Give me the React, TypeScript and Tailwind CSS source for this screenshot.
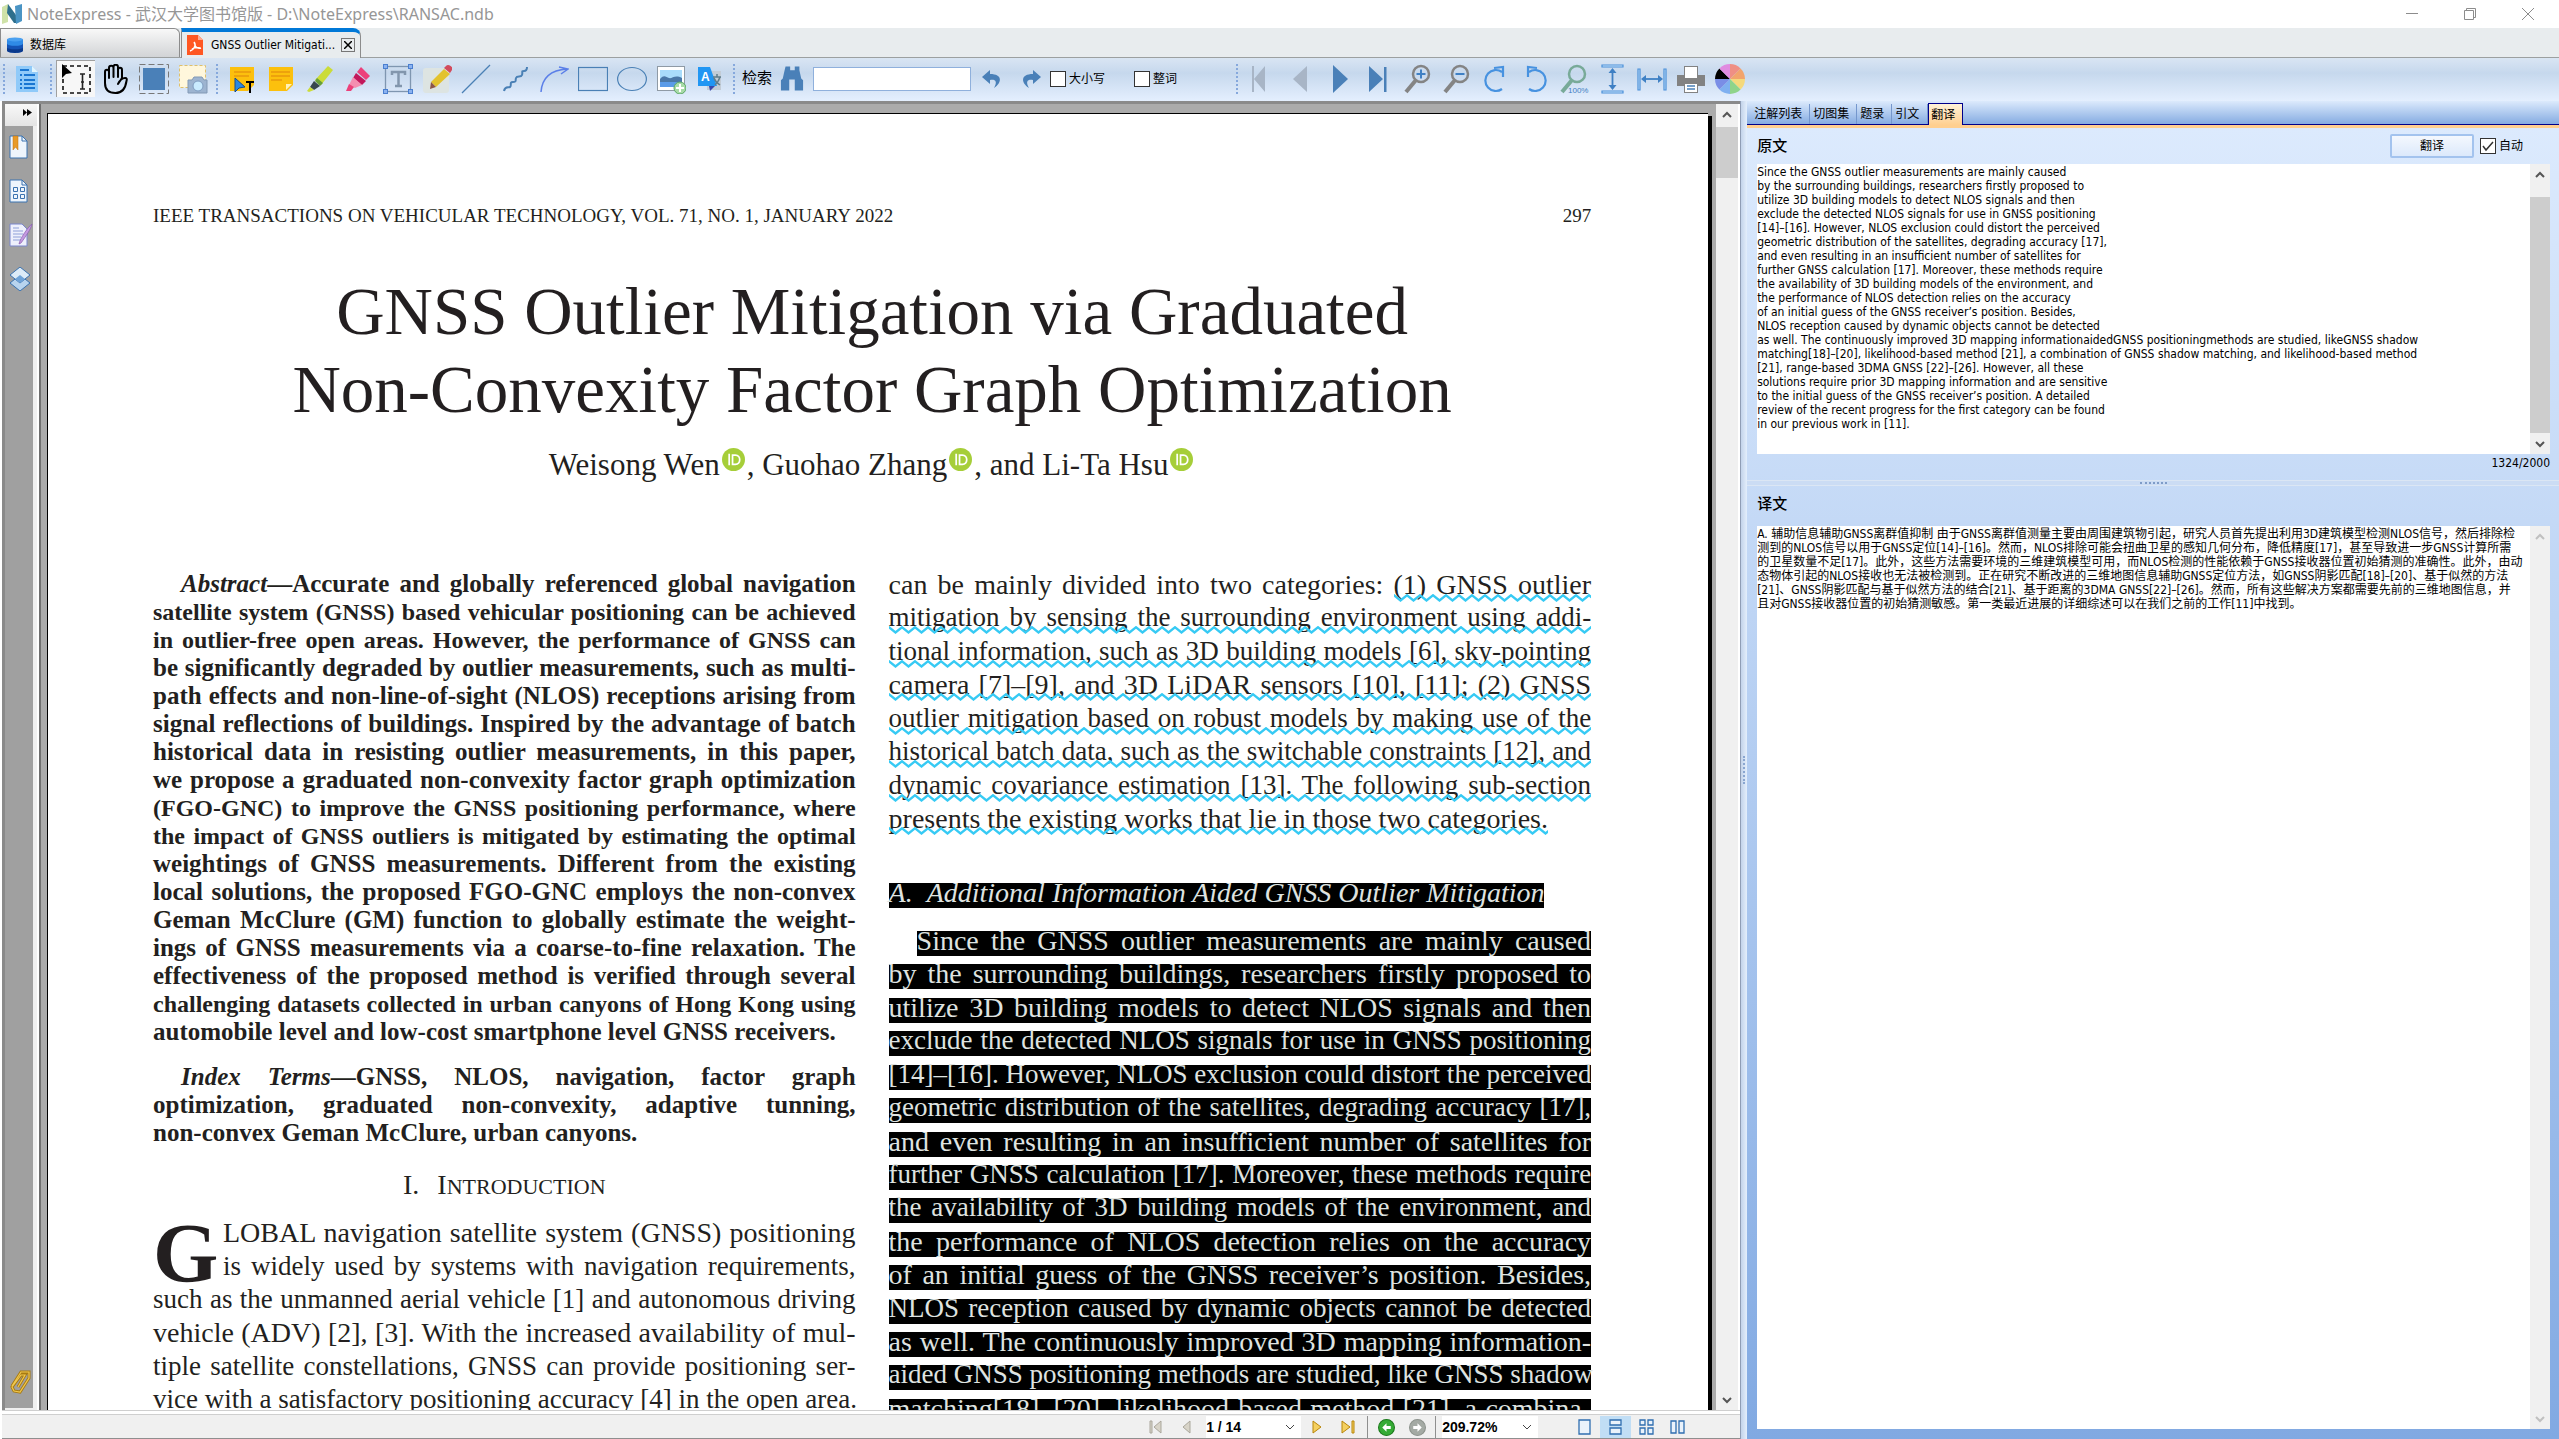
import type { ReactNode } from "react";
import clsx from "clsx";

const UI_FONT = "font-['DejaVu_Sans_Condensed','Roboto','Noto_Sans_CJK_SC',sans-serif]";
const PAPER_FONT = "font-['Liberation_Serif','Times_New_Roman',serif]";

type TextLine = { text: string; tight?: boolean };

const abstractLines: TextLine[] = [
  { text: "satellite system (GNSS) based vehicular positioning can be achieved", tight: true },
  { text: "in outlier-free open areas. However, the performance of GNSS can", tight: true },
  { text: "be significantly degraded by outlier measurements, such as multi-" },
  { text: "path effects and non-line-of-sight (NLOS) receptions arising from" },
  { text: "signal reflections of buildings. Inspired by the advantage of batch" },
  { text: "historical data in resisting outlier measurements, in this paper," },
  { text: "we propose a graduated non-convexity factor graph optimization" },
  { text: "(FGO-GNC) to improve the GNSS positioning performance, where", tight: true },
  { text: "the impact of GNSS outliers is mitigated by estimating the optimal", tight: true },
  { text: "weightings of GNSS measurements. Different from the existing" },
  { text: "local solutions, the proposed FGO-GNC employs the non-convex" },
  { text: "Geman McClure (GM) function to globally estimate the weight-" },
  { text: "ings of GNSS measurements via a coarse-to-fine relaxation. The" },
  { text: "effectiveness of the proposed method is verified through several" },
  { text: "challenging datasets collected in urban canyons of Hong Kong using", tight: true },
];

const introLines: TextLine[] = [
  { text: "such as the unmanned aerial vehicle [1] and autonomous driving", tight: true },
  { text: "vehicle (ADV) [2], [3]. With the increased availability of mul-" },
  { text: "tiple satellite constellations, GNSS can provide positioning ser-", tight: true },
  { text: "vice with a satisfactory positioning accuracy [4] in the open area.", tight: true },
];

const markedLines: TextLine[] = [
  { text: "mitigation by sensing the surrounding environment using addi-", tight: true },
  { text: "tional information, such as 3D building models [6], sky-pointing", tight: true },
  { text: "camera [7]–[9], and 3D LiDAR sensors [10], [11]; (2) GNSS" },
  { text: "outlier mitigation based on robust models by making use of the", tight: true },
  { text: "historical batch data, such as the switchable constraints [12], and", tight: true },
  { text: "dynamic covariance estimation [13]. The following sub-section", tight: true },
];

const selectedLines: TextLine[] = [
  { text: "Since the GNSS outlier measurements are mainly caused" },
  { text: "by the surrounding buildings, researchers firstly proposed to" },
  { text: "utilize 3D building models to detect NLOS signals and then" },
  { text: "exclude the detected NLOS signals for use in GNSS positioning", tight: true },
  { text: "[14]–[16]. However, NLOS exclusion could distort the perceived", tight: true },
  { text: "geometric distribution of the satellites, degrading accuracy [17],", tight: true },
  { text: "and even resulting in an insufficient number of satellites for" },
  { text: "further GNSS calculation [17]. Moreover, these methods require", tight: true },
  { text: "the availability of 3D building models of the environment, and", tight: true },
  { text: "the performance of NLOS detection relies on the accuracy" },
  { text: "of an initial guess of the GNSS receiver’s position. Besides," },
  { text: "NLOS reception caused by dynamic objects cannot be detected", tight: true },
  { text: "as well. The continuously improved 3D mapping information-" },
  { text: "aided GNSS positioning methods are studied, like GNSS shadow", tight: true },
  { text: "matching[18]–[20], likelihood-based method [21], a combina-" },
];

const sourceText = [
  ...selectedLines.slice(0, 12).map((line) => line.text),
  "as well. The continuously improved 3D mapping informationaidedGNSS positioningmethods are studied, likeGNSS shadow",
  "matching[18]–[20], likelihood-based method [21], a combination of GNSS shadow matching, and likelihood-based method",
  "[21], range-based 3DMA GNSS [22]–[26]. However, all these",
  "solutions require prior 3D mapping information and are sensitive",
  "to the initial guess of the GNSS receiver’s position. A detailed",
  "review of the recent progress for the first category can be found",
  "in our previous work in [11].",
].join("\n");

const translatedText = [
  "A. 辅助信息辅助GNSS离群值抑制 由于GNSS离群值测量主要由周围建筑物引起，研究人员首先提出利用3D建筑模型检测NLOS信号，然后排除检",
  "测到的NLOS信号以用于GNSS定位[14]–[16]。然而，NLOS排除可能会扭曲卫星的感知几何分布，降低精度[17]，甚至导致进一步GNSS计算所需",
  "的卫星数量不足[17]。此外，这些方法需要环境的三维建筑模型可用，而NLOS检测的性能依赖于GNSS接收器位置初始猜测的准确性。此外，由动",
  "态物体引起的NLOS接收也无法被检测到。正在研究不断改进的三维地图信息辅助GNSS定位方法，如GNSS阴影匹配[18]–[20]、基于似然的方法",
  "[21]、GNSS阴影匹配与基于似然方法的结合[21]、基于距离的3DMA GNSS[22]–[26]。然而，所有这些解决方案都需要先前的三维地图信息，并",
  "且对GNSS接收器位置的初始猜测敏感。第一类最近进展的详细综述可以在我们之前的工作[11]中找到。",
].join("\n");

function Svg({ children, className = "size-[30px]", box = 30 }: { children: ReactNode; className?: string; box?: number }) {
  return (
    <svg viewBox={`0 0 ${box} ${box}`} className={clsx("shrink-0", className)} fill="none" aria-hidden>
      {children}
    </svg>
  );
}

const magnifier = (color: string) => (
  <>
    <circle cx="18" cy="10" r="8" stroke={color} strokeWidth="2.5" />
    <path d="M13 16 3 28" stroke={color} strokeWidth="4" />
  </>
);

const editTools: { name: string; active?: boolean; icon: ReactNode }[] = [
  {
    name: "Select text",
    active: true,
    icon: (
      <>
        <rect x="2" y="2" width="27" height="27" stroke="#111" strokeWidth="1.6" strokeDasharray="4 3" />
        <path d="M1 0v14l4-4 6-1z" fill="#000" />
        <path d="M19 10h5M19 25h5M21.5 10v15M20 18h3" stroke="#222" strokeWidth="1.6" />
      </>
    ),
  },
  {
    name: "Hand",
    icon: (
      <path
        d="M5 19V8c0-3 4-3 4 0v6V4c0-3 4.500-3 4.500 0v9V3c0-3 4.500-3 4.500 0v10V6c0-3 4-3 4 0v8l-4 6c2-4 4-6 7-6 2 0 2 1 1.500 3-1 7-4 12-11 12S5 25 5 19z"
        stroke="#000"
        strokeWidth="2"
        strokeLinejoin="round"
      />
    ),
  },
  {
    name: "Select area",
    icon: (
      <>
        <rect x="0.5" y="0.5" width="29" height="29" stroke="#777" strokeDasharray="6 3" />
        <rect x="4" y="4" width="22" height="22" fill="#4a80b8" />
      </>
    ),
  },
  {
    name: "Snapshot",
    icon: (
      <>
        <rect x="1.5" y="1.5" width="26" height="22" fill="#fff7dc" stroke="#e0c06a" strokeDasharray="3 2" />
        <path d="M10 16h4l2-3h8l2 3h3v13H10z" fill="#9db4d0" stroke="#8299b5" />
        <circle cx="20" cy="22" r="5" fill="#c9ebff" stroke="#7f9cc0" />
      </>
    ),
  },
];

const markTools: { name: string; icon: ReactNode }[] = [
  {
    name: "Text note",
    icon: (
      <>
        <path d="M3 3h24v18l-6 6H3z" fill="#fcc00d" />
        <path d="M7 8h17M7 12h15" stroke="#e8980c" strokeWidth="1.5" />
        <path d="M8 14v14l4-4 6-1z" fill="#2a88e0" stroke="#174a88" />
        <path d="M19 18h8M23 18v11" stroke="#000" strokeWidth="2" />
      </>
    ),
  },
  {
    name: "Sticky note",
    icon: (
      <>
        <path d="M3 3h24v18l-6 6H3z" fill="#fcc00d" />
        <path d="M5 8h19M5 12h19M5 16h11" stroke="#e8980c" strokeWidth="1.3" />
        <path d="M20 20h6l-6 6z" fill="#fff2b8" />
      </>
    ),
  },
  {
    name: "Highlighter",
    icon: (
      <>
        <path d="m23 2 5 4-12 15-6-5z" fill="#cbdc38" />
        <path d="m12 14 6 5-3 3-5-5z" fill="#689f38" />
        <path d="m9 17 6 5-6 4-4-3z" fill="#37474f" />
        <path d="m5 23 4 3-5 2-2-1z" fill="#cbdc38" />
      </>
    ),
  },
  {
    name: "Eraser marker",
    icon: (
      <>
        <path d="m17 3 9 9-4 4-9-8z" fill="#ec407a" />
        <path d="m12 9 10 8-4 4L9 14z" fill="#c2185b" />
        <path d="m9 13 9 8-7 3-6-3z" fill="#f48fb1" />
        <path d="m5 20 5 3-3 4H2z" fill="#ec407a" />
      </>
    ),
  },
  {
    name: "Text box",
    icon: (
      <>
        <rect x="2.5" y="2.5" width="25" height="25" stroke="#7f96b0" strokeWidth="1.3" />
        {[[0, 0], [25, 0], [0, 25], [25, 25]].map(([x, y]) => (
          <rect key={`${x}-${y}`} x={x + 0.5} y={y + 0.5} width="4" height="4" fill="#8bb2f0" stroke="#4a7fd0" />
        ))}
        <path d="M9 11V8h13v3M15.5 8v14M12 22h7" stroke="#8296ad" strokeWidth="2.5" />
      </>
    ),
  },
  {
    name: "Pencil",
    icon: (
      <>
        <rect x="1" y="4" width="26" height="25" rx="3" fill="#dde4e2" />
        <path d="M22 5 28 10 14 23 9 18z" fill="#e3c22e" />
        <path d="m9 18 5 5-6 2z" fill="#8d5548" />
        <path d="M24 2c2-3 8 1 6 4l-2 3-6-5z" fill="#d24b5c" />
      </>
    ),
  },
  { name: "Line", icon: <path d="M1 29 29 1" stroke="#4a80b5" strokeWidth="1.3" /> },
  {
    name: "Freehand",
    icon: (
      <path
        d="M4 27c1-5 4-3 6-4s-1-5 3-5 2-1 3-4 5 0 6-3-1-4 2-4 3-2 3-4"
        stroke="#4a80b5"
        strokeWidth="2"
      />
    ),
  },
  {
    name: "Arrow",
    icon: <path d="M2 28C3 14 12 6 28 5M20 3l9 2-7 5" stroke="#5b7fe8" strokeWidth="1.5" />,
  },
  { name: "Rectangle", icon: <rect x="0.5" y="3.5" width="29" height="23" stroke="#4a80b5" strokeWidth="1.2" /> },
  { name: "Ellipse", icon: <ellipse cx="15" cy="15" rx="14.4" ry="11.5" stroke="#4a80b5" strokeWidth="1.2" /> },
  {
    name: "Image",
    icon: (
      <>
        <rect x="1.5" y="2.5" width="27" height="24" fill="#fff" stroke="#8f9aa5" />
        <rect x="4" y="6" width="22" height="17" fill="#a9dcfb" />
        <path d="M4 15c4-5 6-2 9-1s6-4 13 0v4H4z" fill="#4a78a8" />
        <path d="M4 18h22v5H4z" fill="#5a9be8" />
        <circle cx="24" cy="24" r="6" fill="#a8dba8" stroke="#5da766" />
        <path d="M20 24h8M24 20v8" stroke="#fff" strokeWidth="2" />
      </>
    ),
  },
  {
    name: "Translate",
    icon: (
      <>
        <rect x="12" y="7" width="14" height="19" fill="#c3ccd6" />
        <path d="m14 22 6 0-5 5z" fill="#3949ab" />
        <path d="M3 3h12l7 19H3z" fill="#2196f3" />
        <text x="6" y="17" fontSize="12" fontWeight="700" fill="#fff" fontFamily="Liberation Sans">A</text>
        <path d="M18 13h8M22 10v3M25 13c-1 4-3 6-5 8M19 14c1 3 3 5 6 7" stroke="#607d8b" strokeWidth="1.5" />
      </>
    ),
  },
];

const viewTools: { name: string; icon: ReactNode }[] = [
  { name: "First page", icon: <path d="M5 2h2v26H5zM18 2v26L7 15z" fill="#a8b5c6" /> },
  { name: "Previous page", icon: <path d="M21 2v26L7 15z" fill="#a8b5c6" /> },
  { name: "Next page", icon: <path d="M8 1v28l15-14z" fill="#4a80b8" /> },
  { name: "Last page", icon: <path d="M5 2v26l14-13zM20 3h2.500v25H20z" fill="#4a80b8" /> },
  {
    name: "Zoom in",
    icon: <>{magnifier("#848484")}<path d="M13.5 10h9M18 5.500v9" stroke="#3f80c4" strokeWidth="2" /></>,
  },
  {
    name: "Zoom out",
    icon: <>{magnifier("#848484")}<path d="M13.5 10h9" stroke="#3f80c4" strokeWidth="2" /></>,
  },
  {
    name: "Rotate clockwise",
    icon: <path d="M21 8A10.500 10.500 0 1 0 21 25M13 4l9-1v10" stroke="#4792e0" strokeWidth="2.2" />,
  },
  {
    name: "Rotate counter-clockwise",
    icon: <path d="M9 8A10.500 10.500 0 1 1 9 25M17 4 8 3v10" stroke="#4792e0" strokeWidth="2.2" />,
  },
  {
    name: "Actual size",
    icon: (
      <>
        {magnifier("#78aa98")}
        <text x="9" y="29" fontSize="8" fill="#3f80c4" fontFamily="Liberation Sans">100%</text>
      </>
    ),
  },
  {
    name: "Fit height",
    icon: (
      <>
        <path d="M4 1h21v2H4zM4 27h21v2H4z" stroke="#4a90d9" strokeWidth="1.2" fill="#cfe6fb" />
        <path d="M14.5 6v18" stroke="#3f80c4" strokeWidth="1.8" />
        <path d="m14.5 4 4 5h-8zM14.5 26l4-5h-8z" fill="#3f80c4" />
      </>
    ),
  },
  {
    name: "Fit width",
    icon: (
      <>
        <path d="M1 5h2v21H1zM27 5h2v21h-2z" stroke="#4a90d9" strokeWidth="1.2" fill="#cfe6fb" />
        <path d="M6 15h18" stroke="#3f80c4" strokeWidth="1.8" />
        <path d="m4 15 5-4v8zM26 15l-5-4v8z" fill="#3f80c4" />
      </>
    ),
  },
  {
    name: "Print",
    icon: (
      <>
        <path d="M1 11h28v11H1z" fill="#828282" />
        <rect x="8.5" y="2.5" width="13" height="12" fill="#fff" stroke="#828282" />
        <rect x="8.5" y="19.5" width="13" height="9" fill="#fff" stroke="#828282" />
        <path d="M11 22h8M11 25h8" stroke="#4a80b8" strokeWidth="1.5" />
      </>
    ),
  },
  {
    name: "Colours",
    icon: (
      <>
        {["#ef8f84", "#f2a46c", "#f5d97c", "#8fd48a", "#7fb0f0", "#7a8ee6", "#000", "#e08be0"].map((color, i) => (
          <path key={color} d="M15 15V0a15 15 0 0 1 10.600 4.400z" fill={color} transform={`rotate(${i * 45} 15 15)`} />
        ))}
      </>
    ),
  },
];

function ToolButton({ name, icon, active }: { name: string; icon: ReactNode; active?: boolean }) {
  return (
    <button
      type="button"
      aria-label={name}
      className={clsx(
        "grid h-[37px] w-[39px] shrink-0 place-items-center",
        active && "border-t border-l border-[#a0a0a0] bg-[#f7f7f7]",
      )}
    >
      <Svg>{icon}</Svg>
    </button>
  );
}

function Grip({ className = "w-[10px]" }: { className?: string }) {
  return (
    <span className={clsx("flex shrink-0 justify-center", className)}>
      <span className="h-[30px] border-l-2 border-dotted border-[#86a8dc]" />
    </span>
  );
}

function TitleBar() {
  return (
    <header className="flex h-7 shrink-0 items-center justify-between bg-white pr-[25px] pl-[2px]">
      <div className="flex items-center gap-[5px]">
        <Svg className="size-5" box={20}>
          <path d="M0 3 6 0v18l-6 2z" fill="#cfe2a8" />
          <path d="m6 0 8 11v8h-2L5 9z" fill="#2e6f8c" />
          <path d="m13 2 7-2v17l-6 3z" fill="#4a94c4" />
        </Svg>
        <h1 className="font-['Noto_Sans','Noto_Sans_CJK_SC',sans-serif] text-base leading-5 text-[#969696]">
          NoteExpress - 武汉大学图书馆版 - D:\NoteExpress\RANSAC.ndb
        </h1>
      </div>
      <div className="flex items-center gap-[46px] text-[#8c8c8c]">
        <button type="button" aria-label="Minimize">
          <Svg className="size-3" box={12}><path d="M0 5.500h12" stroke="currentColor" /></Svg>
        </button>
        <button type="button" aria-label="Restore">
          <Svg className="size-3" box={12}>
            <path d="M.5 2.500h9v9h-9zM2.500 2V.5h9v9H10" stroke="currentColor" />
          </Svg>
        </button>
        <button type="button" aria-label="Close">
          <Svg className="size-3" box={12}><path d="m0 0 12 12M12 0 0 12" stroke="currentColor" /></Svg>
        </button>
      </div>
    </header>
  );
}

function DocumentTabs() {
  return (
    <nav className="flex h-[30px] shrink-0 items-stretch border-b border-[#9ca0a0] bg-[#e8ecee] text-xs text-black">
      <button
        type="button"
        className="flex w-[180px] items-center gap-[7px] rounded-tr-md border border-b-0 border-[#8c8c8c] bg-linear-to-b from-[#f8f8f8] to-[#d2d4d6] pt-[3px] pl-[6px]"
      >
        <Svg className="h-5 w-4" box={20}>
          <path d="M0 3v14c0 4 20 4 20 0V3z" fill="#1553b5" />
          <path d="M0 3v5c0 4 20 4 20 0V3z" fill="#2f8ae6" />
          <path d="M0 13v4c0 4 20 4 20 0v-4c0 3-20 3-20 0z" fill="#0b3a8c" />
          <ellipse cx="10" cy="3" rx="10" ry="2.5" fill="#4aa0f0" />
        </Svg>
        数据库
      </button>
      <div className="-mb-px ml-px flex w-[180px] items-center rounded-tr-lg border-x border-t-4 border-x-[#8c8c8c] border-t-[#0078d7] bg-[#e8ecee] pl-[5px]">
        <svg viewBox="0 0 16 20" className="h-5 w-4 shrink-0" aria-hidden>
          <path d="M0 0h11l5 5v15H0z" fill="#ff5722" />
          <path d="m11 0 5 5h-5z" fill="#ffab91" />
          <path d="M7 7c3 4-1 8-4 9M8 10c0 2 3 4 6 3M5 14c3-2 5-2 8-1" stroke="#fff" strokeWidth="1.5" fill="none" />
        </svg>
        <a href="#paper" className="ml-2 flex-1 whitespace-nowrap">GNSS Outlier Mitigati...</a>
        <button type="button" aria-label="Close tab" className="mr-[5px] grid size-[14px] place-items-center border border-[#777]">
          <Svg className="size-2" box={8}><path d="m0 0 8 8M8 0 0 8" stroke="#000" strokeWidth="1.5" /></Svg>
        </button>
      </div>
    </nav>
  );
}

function CheckOption({ label, className }: { label: string; className?: string }) {
  return (
    <label className={clsx("flex items-center gap-[3px] text-xs whitespace-nowrap", className)}>
      <input type="checkbox" className="size-4 appearance-none border border-[#333] bg-white" />
      {label}
    </label>
  );
}

function Toolbar() {
  return (
    <div className="flex h-[43px] shrink-0 items-center bg-linear-to-b from-[#d9e5f3] from-0% via-[#c6d8ed] via-35% to-[#e4effe] pb-[2px]">
      <Grip className="w-[7px]" />
      <ToolButton
        name="Notes"
        icon={
          <>
            <path d="M4 2h16l6 6v20H4z" fill="#90caf9" />
            <path d="m20 2 6 6h-6z" fill="#e1f5fe" />
            <path d="M8 6h9M12 11h11M12 16h11M12 20h11M12 24h11M8 11h2M8 16h2M8 20h2M8 24h2" stroke="#1976d2" strokeWidth="1.8" />
          </>
        }
      />
      <Grip />
      {editTools.map((tool) => <ToolButton key={tool.name} {...tool} />)}
      <Grip />
      {markTools.map((tool) => <ToolButton key={tool.name} {...tool} />)}
      <Grip />
      <label htmlFor="search" className="ml-[3px] text-[15px] text-black">检索</label>
      <Svg className="ml-[8px] h-[27px] w-[24px]" box={26}>
        <path
          d="M6 0h5v4h5V0h5v4l2 9 2 2v11h-9V14h-6v12H1V15l2-2 2-9z"
          fill="#4a80b8"
        />
      </Svg>
      <input id="search" type="text" className="mr-[1px] ml-[9px] h-6 w-[158px] border border-[#8fb0dc] bg-white px-1 text-xs" />
      <button type="button" aria-label="Find previous" className="grid w-[39px] place-items-center">
        <Svg className="size-6" box={24}><path d="M10 3 2 10l8 7v-4c5-1 8 1 4 8 8-5 9-14-4-14z" fill="#4a80b8" /></Svg>
      </button>
      <button type="button" aria-label="Find next" className="grid w-[39px] place-items-center">
        <Svg className="size-6" box={24}><path d="m14 3 8 7-8 7v-4c-5-1-8 1-4 8C2 16 1 7 14 7z" fill="#4a80b8" /></Svg>
      </button>
      <CheckOption label="大小写" className="w-[84px]" />
      <CheckOption label="整词" className="w-[98px]" />
      <Grip />
      {viewTools.map((tool) => <ToolButton key={tool.name} {...tool} />)}
    </div>
  );
}

function ScrollBar({ className, thumb, muted }: { className?: string; thumb?: string; muted?: boolean }) {
  return (
    <div className={clsx("flex shrink-0 flex-col items-center justify-between bg-[#f0f0f0] py-[5px]", muted ? "text-[#c0c0c0]" : "text-[#555]", className)}>
      <Svg className="size-[10px]" box={10}><path d="m1 8 4-4 4 4" stroke="currentColor" strokeWidth="2" /></Svg>
      {thumb && <span className={clsx("w-full bg-[#cdcdcd]", thumb)} />}
      <Svg className="size-[10px]" box={10}><path d="m1 3 4 4 4-4" stroke="currentColor" strokeWidth="2" /></Svg>
    </div>
  );
}

function Bookmarks() {
  const page = (
    <>
      <path d="M1 1h12l5 5v17H1z" fill="#eef5fc" stroke="#3a72b0" />
      <path d="M13 1v5h5" stroke="#3a72b0" />
    </>
  );
  return (
    <aside className="flex w-8 shrink-0 flex-col border-r-4 border-b-2 border-[#f0f0f0] bg-[#a0a0a0]">
      <button type="button" aria-label="Expand" className="-mr-1 grid h-[22px] place-items-end bg-linear-to-b from-[#f8f8f8] to-[#e4e4e4] pr-[5px] pb-[10px]">
        <svg viewBox="0 0 9 7" className="h-[7px] w-[9px]" aria-hidden><path d="m0 0 4 3.500L0 7zM4 0l5 3.500L4 7z" fill="#000" /></svg>
      </button>
      <div className="flex flex-1 flex-col items-center pt-[9px] pb-[14px] pl-[3px]">
        <button type="button" aria-label="Bookmarks" className="mb-5">
          <Svg className="size-6" box={24}>{page}<path d="M4 1h5v14l-2.500-3L4 15z" fill="#e89a28" stroke="#c07010" strokeWidth=".5" /></Svg>
        </button>
        <button type="button" aria-label="Thumbnails" className="mb-5">
          <Svg className="size-6" box={24}>{page}<path d="M4.5 8.500h4v4h-4zM11.500 8.500h4v4h-4zM4.500 15.500h4v4h-4zM11.500 15.500h4v4h-4z" stroke="#3a72b0" /></Svg>
        </button>
        <button type="button" aria-label="Annotations" className="mb-5">
          <Svg className="size-6" box={24}>
            <path d="M1 1h12l5 5v17H1z" fill="#eef0fc" stroke="#7a86cc" />
            <path d="M4 5h6M4 8h10M4 11h10M4 14h8M4 17h8" stroke="#8fa0d8" />
            <path d="M23 1c-3 2-12 14-13 20l2-1C17 13 22 6 23 1z" fill="#c49be0" stroke="#8a5cb0" strokeWidth=".7" />
          </Svg>
        </button>
        <button type="button" aria-label="Layers">
          <Svg className="size-6" box={24}>
            <path d="m11 8 10 8-10 8-10-8z" fill="#b8d4ee" stroke="#3a72b0" />
            <path d="m11 0 10 8-10 8L1 8z" fill="#dcebf8" stroke="#3a72b0" />
            <path d="m11 8 5 4-5 4-5-4z" fill="#6fa3d8" />
          </Svg>
        </button>
        <button type="button" aria-label="Attachments" className="mt-auto">
          <Svg className="size-6" box={24}>
            <path d="m3 16 9-14h8v6l-9 14-6-1-2-4 9-12h4l-7 12" stroke="#a87a10" strokeWidth="3" />
            <path d="m3 16 9-14h8v6l-9 14-6-1-2-4 9-12h4l-7 12" stroke="#f0c850" strokeWidth="1.2" />
          </Svg>
        </button>
      </div>
    </aside>
  );
}

function Squiggle({ id }: { id: string }) {
  return (
    <svg className="absolute top-[25px] left-0 h-2 w-full" aria-hidden>
      <pattern id={id} width="13" height="8" patternUnits="userSpaceOnUse">
        <path d="M-1.500 2.500 0 1.300 6.500 6.500 13 1.300 14.500 2.500" stroke="#36caf4" strokeWidth="2.400" fill="none" />
      </pattern>
      <rect width="100%" height="8" fill={`url(#${id})`} />
    </svg>
  );
}

// One typeset line, stretched to the column width unless it ends a paragraph.
function Line({ children, last, className }: { children: ReactNode; last?: boolean; className?: string }) {
  return (
    <div className={clsx("relative whitespace-nowrap", last ? "self-start" : "text-justify [text-align-last:justify]", className)}>
      {children}
    </div>
  );
}

function Orcid() {
  return (
    <Svg className="mx-[2px] inline size-[23px] -translate-y-[8px]" box={24}>
      <circle cx="12" cy="12" r="12" fill="#a6ce39" />
      <path d="M7.5 6v12M11 7.500h3c6 0 6 9.500 0 9.500h-3z" stroke="#fff" strokeWidth="1.8" />
    </Svg>
  );
}

const SELECTED =
  "bg-[linear-gradient(transparent_7px,#000_7px,#000_32px,transparent_32px)] text-[#dfe3e0]";

function Paper() {
  return (
    <article
      id="paper"
      className={clsx("min-w-0 flex-1 overflow-hidden border-t border-l border-black bg-white pt-[90px] pr-[117px] pl-[105px] text-[#231f20]", PAPER_FONT)}
    >
      <div className="flex justify-between text-[19px] leading-6">
        <span>IEEE TRANSACTIONS ON VEHICULAR TECHNOLOGY, VOL. 71, NO. 1, JANUARY 2022</span>
        <span>297</span>
      </div>
      <h2 className="mt-11 text-center text-[67px] leading-[78px]">
        GNSS Outlier Mitigation via Graduated
        <br />
        Non-Convexity Factor Graph Optimization
      </h2>
      <p className="mt-[19px] h-9 text-center text-[31px] leading-9">
        Weisong Wen
        <Orcid />, Guohao Zhang
        <Orcid />, and Li-Ta Hsu
        <Orcid />
      </p>

      <div className="mt-[85px] grid grid-cols-2 items-start gap-x-[33px] text-[28px] leading-[33px]">
        <section>
          <div className="mt-[2px] flex h-[474px] flex-col justify-between text-[25px] leading-7 font-bold">
            <Line className="pl-7">
              <i>Abstract</i>—Accurate and globally referenced global navigation
            </Line>
            {abstractLines.map(({ text, tight }) => (
              <Line key={text} className={clsx(tight && "text-[24px]")}>{text}</Line>
            ))}
            <Line last>automobile level and low-cost smartphone level GNSS receivers.</Line>
          </div>
          <div className="mt-[19px] text-[25px] leading-7 font-bold">
            <Line className="pl-7"><i>Index Terms</i>—GNSS, NLOS, navigation, factor graph</Line>
            <Line>optimization, graduated non-convexity, adaptive tunning,</Line>
            <Line last>non-convex Geman McClure, urban canyons.</Line>
          </div>
          <h3 className="mt-[21px] text-center">
            I.<span className="ml-[18px]">I</span>
            <span className="text-[22px]">NTRODUCTION</span>
          </h3>
          <div className="mt-[13px] flex h-[67px]">
            <span className="w-[70px] shrink-0 text-[84px] leading-[75px] font-bold">G</span>
            <div className="flex flex-1 flex-col justify-between">
              <Line>LOBAL navigation satellite system (GNSS) positioning</Line>
              <Line className="text-[27px]">is widely used by systems with navigation requirements,</Line>
            </div>
          </div>
          <div className="flex h-[133px] flex-col justify-between">
            {introLines.map(({ text, tight }) => (
              <Line key={text} className={clsx(tight && "text-[27px]")}>{text}</Line>
            ))}
          </div>
        </section>

        <section>
          <div className="flex h-[267px] flex-col justify-between">
            <Line>
              can be mainly divided into two categories:{" "}
              <span className="relative">
                (1) GNSS outlier
                <Squiggle id="squiggle-first" />
              </span>
            </Line>
            {markedLines.map(({ text, tight }, i) => (
              <Line key={text} className={clsx(tight && "text-[27px]")}>
                {text}
                <Squiggle id={`squiggle-${i}`} />
              </Line>
            ))}
            <Line last>
              presents the existing works that lie in those two categories.
              <Squiggle id="squiggle-last" />
            </Line>
          </div>
          <h3 className={clsx("mt-[41px] w-fit italic", SELECTED)}>
            A.<span className="ml-[14px]">Additional Information Aided GNSS Outlier Mitigation</span>
          </h3>
          <div className="mt-[15px] flex h-[501px] flex-col justify-between">
            {selectedLines.map(({ text, tight }, i) => (
              <Line key={text} className={clsx(SELECTED, i === 0 && "ml-7", tight && "text-[27px]")}>{text}</Line>
            ))}
          </div>
        </section>
      </div>
    </article>
  );
}

function Chevron() {
  return <Svg className="pointer-events-none -ml-4 size-[10px]" box={10}><path d="m1 3 4 4 4-4" stroke="#444" /></Svg>;
}

const layouts: { name: string; d: string; active?: boolean }[] = [
  { name: "Single page", d: "M3 1h11v14H3z" },
  { name: "Continuous", d: "M3 1h11v5H3zM3 9h11v6H3z", active: true },
  { name: "Continuous facing", d: "M2 1h5v5H2zM10 1h5v5h-5zM2 9h5v6H2zM10 9h5v6h-5z" },
  { name: "Facing", d: "M2 2h5v12H2zM10 2h5v12h-5z" },
];

function StatusBar() {
  return (
    <footer className="flex h-6 shrink-0 items-center justify-end border-b border-[#8f8f8f] bg-[#f0f0f0] pt-px pr-[47px] font-['Liberation_Sans',sans-serif] text-[14px] font-bold text-black">
      <button type="button" aria-label="First page" className="mr-[14px]">
        <Svg className="size-4" box={16}><path d="M2 2h2v12H2zM13 2v12L6 8z" fill="#d8d4c8" stroke="#aaa79c" /></Svg>
      </button>
      <button type="button" aria-label="Previous page" className="mr-3">
        <Svg className="size-4" box={16}><path d="M12 2v12L5 8z" fill="#d8d4c8" stroke="#aaa79c" /></Svg>
      </button>
      <select aria-label="Page" className="h-[22px] w-[95px] appearance-none bg-white"><option>1 / 14</option></select>
      <Chevron />
      <button type="button" aria-label="Next page" className="ml-[14px]">
        <Svg className="size-4" box={16}><path d="m4 2 8 6-8 6z" fill="#f5d060" stroke="#b8860b" /></Svg>
      </button>
      <button type="button" aria-label="Last page" className="ml-[15px]">
        <Svg className="size-4" box={16}><path d="m2 2 8 6-8 6zM12 2h2v12h-2z" fill="#f5d060" stroke="#b8860b" /></Svg>
      </button>
      <span className="mr-[10px] ml-[11px] h-full w-px bg-[#8f8f8f]" />
      <button type="button" aria-label="Back" className="mr-[14px]">
        <Svg className="size-[17px]" box={16}><circle cx="8" cy="8" r="7.5" fill="#35ab35" stroke="#1d7a1d" /><path d="m4 8 4-4v2.500h4v3H8V12z" fill="#fff" /></Svg>
      </button>
      <button type="button" aria-label="Forward">
        <Svg className="size-[17px]" box={16}><circle cx="8" cy="8" r="7.5" fill="#a4aaa4" stroke="#8d938d" /><path d="m12 8-4-4v2.500H4v3h4V12z" fill="#fff" /></Svg>
      </button>
      <span className="mr-[6px] ml-[9px] h-full w-px bg-[#8f8f8f]" />
      <select aria-label="Zoom" className="h-[22px] w-[96px] appearance-none bg-white"><option>209.72%</option></select>
      <Chevron />
      <div className="ml-[37px] flex h-full">
        {layouts.map(({ name, d, active }) => (
          <button key={name} type="button" aria-label={name} className={clsx("grid h-full w-[31px] place-items-center", active && "bg-[#c1def5]")}>
            <Svg className="size-[17px]" box={17}><path d={d} fill="#eaf2fb" stroke="#2f6eb0" strokeWidth="1.3" /></Svg>
          </button>
        ))}
      </div>
    </footer>
  );
}

function Viewer() {
  return (
    <main className="flex min-w-0 flex-1 flex-col border-l-2 border-white">
      <div className="flex min-h-0 flex-1 border-t-[3px] border-l-[3px] border-[#8a8a8a]">
        <Bookmarks />
        <div className="mr-[2px] ml-[2px] flex min-w-0 flex-1 border-l-2 border-[#6f6f6f] bg-[#ababab]">
          <div className="flex min-w-0 flex-1 pt-[9px] pr-1 pl-[6px]">
            <Paper />
            <span className="mt-[3px] w-1 shrink-0 bg-black" />
          </div>
          <ScrollBar className="w-[22px] [&>svg:last-child]:mt-auto" thumb="mt-[8px] h-[51px]" />
        </div>
      </div>
      <div className="h-[5px] shrink-0 border-y border-[#cfcfcf] bg-white" />
      <StatusBar />
    </main>
  );
}

const sideTabs = [
  { label: "注解列表", size: "w-[63px] pl-[7px]" },
  { label: "切图集", size: "w-[47px] pl-[3px]" },
  { label: "题录", size: "w-[35px] pl-[3px]" },
  { label: "引文", size: "w-[36px] pl-[3px]" },
];

function TranslatePanel() {
  return (
    <div className="flex min-h-0 flex-1 flex-col bg-linear-to-b from-[#dceafd] via-[#c4d9f6] via-30% to-[#81a9e2] text-black">
      <div className="flex flex-col pr-[9px] pl-[10px]">
        <div className="flex h-9 items-center">
          <label htmlFor="source" className="flex-1 text-[15px] font-medium">原文</label>
          <button type="button" className="mr-[6px] h-6 w-[84px] rounded-xs border-2 border-[#a3c3ee] bg-linear-to-b from-[#f4f8fe] to-[#dce9fb] text-xs">翻译</button>
          <label className="mr-[27px] flex items-center gap-[3px] text-xs">
            <span className="grid">
              <input type="checkbox" defaultChecked className="col-start-1 row-start-1 size-4 appearance-none border border-[#333] bg-white" />
              <Svg className="pointer-events-none col-start-1 row-start-1 size-4" box={16}><path d="m3 8 3 4 7-8" stroke="#333" strokeWidth="1.5" /></Svg>
            </span>
            自动
          </label>
        </div>
        <div className="flex h-[290px]">
          <textarea id="source" readOnly value={sourceText} className="flex-1 resize-none overflow-hidden bg-white pt-px text-xs leading-[14px] whitespace-pre outline-none" />
          <ScrollBar className="w-5" thumb="mt-[18px] mb-[6px] flex-1" />
        </div>
        <output htmlFor="source" className="text-right text-xs leading-[18px]">1324/2000</output>
      </div>
      <div className="mt-2 flex h-[6px] shrink-0 items-center justify-center border-y border-[#dbe6f4] bg-[#cbdcf4]">
        <span className="w-[27px] border-t-2 border-dotted border-[#7f9cc8]" />
      </div>
      <div className="flex min-h-0 flex-1 flex-col pr-[9px] pb-[10px] pl-[10px]">
        <label htmlFor="target" className="mb-1 text-[15px] leading-9 font-medium">译文</label>
        <div className="flex min-h-0 flex-1">
          <textarea id="target" readOnly value={translatedText} className="flex-1 resize-none overflow-hidden bg-white pt-px text-xs leading-[14px] whitespace-pre outline-none" />
          <ScrollBar className="w-5" muted />
        </div>
      </div>
    </div>
  );
}

function SidePanel() {
  return (
    <aside className="flex w-[32%] shrink-0">
      <div className="flex w-[7px] shrink-0 items-center justify-center border-l border-[#8f9db5] bg-linear-to-r from-[#c3d3ea] to-[#e4effc]">
        <span className="h-7 border-l-2 border-dotted border-[#8aa6d0]" />
      </div>
      <div className="flex min-w-0 flex-1 flex-col">
        <nav className="flex h-[27px] shrink-0 items-end border-b-3 border-[#ffcf8f] bg-linear-to-b from-[#dceafc] to-[#82a9e0] text-xs text-black">
          <div className="flex h-6 flex-1 items-end border-b border-[#00008b]">
            {sideTabs.map(({ label, size }) => (
              <button key={label} type="button" className={clsx("h-[20px] border-r border-[#7496cc] text-left whitespace-nowrap", size)}>
                {label}
              </button>
            ))}
            <button type="button" className="-mb-px h-[22px] w-[35px] border border-b-0 border-[#00008b] bg-linear-to-b from-[#fff3d8] to-[#ffcf8f] pl-[2px] text-left whitespace-nowrap">翻译</button>
          </div>
        </nav>
        <TranslatePanel />
      </div>
    </aside>
  );
}

export default function App() {
  return (
    <div className={clsx("flex h-screen w-full flex-col overflow-hidden bg-white", UI_FONT)}>
      <TitleBar />
      <DocumentTabs />
      <Toolbar />
      <div className="flex min-h-0 flex-1">
        <Viewer />
        <SidePanel />
      </div>
    </div>
  );
}
